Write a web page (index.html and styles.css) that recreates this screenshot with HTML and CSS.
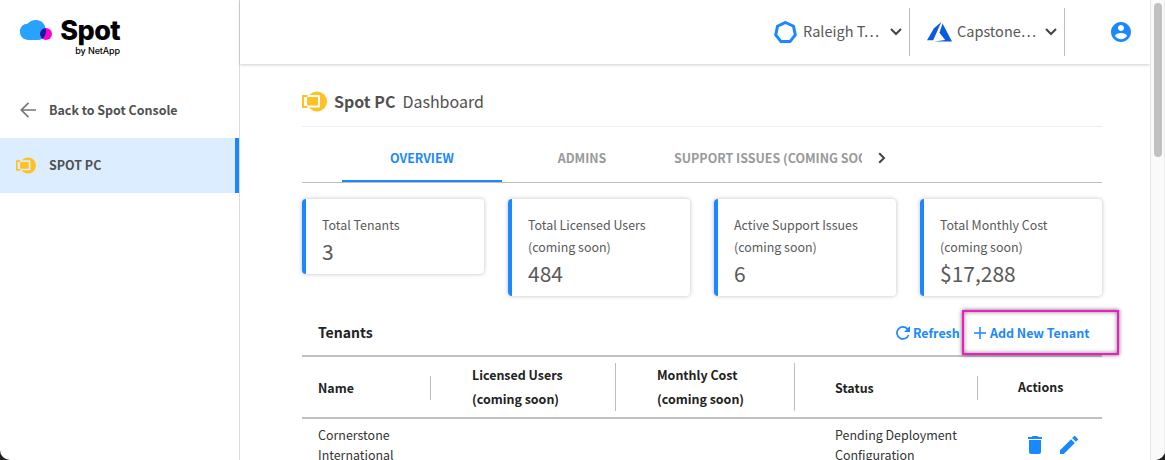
FILE: index.html
```html
<!DOCTYPE html>
<html lang="en">
<head>
<meta charset="utf-8">
<title>Spot PC Dashboard</title>
<link rel="stylesheet" href="styles.css">
</head>
<body>
<div class="app">
  <aside class="sidebar">
    <div class="logo">
      <svg class="logo-cloud" width="33" height="22" viewBox="0 0 33 22">
        <circle cx="26" cy="15" r="6" fill="#ff00d0"/>
        <path d="M8.500 21C-2.800 21-2.800 5 7.500 4.800C12-1 22.500-.5 25 7.500C28 14.500 24 21 18.500 21Z" fill="#28a2ff"/>
        <clipPath id="dot"><circle cx="26" cy="15" r="6"/></clipPath>
        <path clip-path="url(#dot)" d="M8.500 21C-2.800 21-2.800 5 7.500 4.800C12-1 22.500-.5 25 7.500C28 14.500 24 21 18.500 21Z" fill="#2114a0"/>
      </svg>
      <div class="logo-text"><span class="logo-name">Spot</span><span class="logo-by">by NetApp</span></div>
    </div>
    <a class="side-item back">
      <svg width="16" height="16" viewBox="0 0 16 16" fill="none" stroke="#777" stroke-width="1.700"><path d="M16 8H1.500M8.500 .8 1.300 8l7.200 7.200"/></svg>
      <span>Back to Spot Console</span>
    </a>
    <a class="side-item active">
      <svg class="pc" width="20" height="17" viewBox="0 0 25 21"><circle cx="15" cy="10.500" r="10" fill="#ffc225"/><rect x="3" y="4" width="15" height="12.500" rx="1" fill="#dbedff"/><path d="M5.500 5H1v11h4.500" fill="none" stroke="#ffc225" stroke-width="2"/><rect x="5" y="6" width="11" height="8.500" rx="1" fill="#ffc225"/></svg>
      <span>SPOT PC</span>
    </a>
  </aside>
  <div class="page">
    <header class="topbar">
      <div class="picker org">
        <svg width="25" height="25" viewBox="0 0 25 25" fill="none" stroke="#1a88ff" stroke-width="3"><path d="M12.500 2.500 20.500 6.200 22.300 14.800 17 21.600H8L2.700 14.800 4.500 6.200Z"/></svg>
        <span>Raleigh T…</span>
        <svg class="chev" width="12" height="8" viewBox="0 0 12 8"><path d="M1 1l5 5 5-5"/></svg>
      </div>
      <div class="picker account">
        <svg width="25" height="20" viewBox="0 0 25 20" fill="#0a5be0"><path d="M14.300 0 7 6.200 0 18.200h6.200Z"/><path d="M15.500 1.500 25 19.600H7.200L18.200 18 12.500 10.800Z"/></svg>
        <span>Capstone…</span>
        <svg class="chev" width="12" height="8" viewBox="0 0 12 8"><path d="M1 1l5 5 5-5"/></svg>
      </div>
      <svg class="user" width="20" height="20" viewBox="2 2 20 20"><path fill="#1a88ff" d="M12 2C6.480 2 2 6.480 2 12s4.480 10 10 10 10-4.480 10-10S17.520 2 12 2zm0 3c1.660 0 3 1.340 3 3s-1.340 3-3 3-3-1.340-3-3 1.340-3 3-3zm0 14.200c-2.500 0-4.710-1.280-6-3.220.03-1.990 4-3.080 6-3.080 1.990 0 5.970 1.090 6 3.080-1.290 1.940-3.500 3.220-6 3.220z"/></svg>
    </header>
    <main class="content">
      <h1 class="title">
        <svg width="25" height="21" viewBox="0 0 25 21"><circle cx="15" cy="10.500" r="10" fill="#ffc225"/><rect x="3" y="4" width="15" height="12.500" rx="1" fill="#fff"/><path d="M5.500 5H1v11h4.500" fill="none" stroke="#ffc225" stroke-width="2"/><rect x="5" y="6" width="11" height="8.500" rx="1" fill="#ffc225"/></svg>
        <b>Spot PC</b><span>Dashboard</span>
      </h1>
      <nav class="tabs">
        <a class="tab on">OVERVIEW</a>
        <a class="tab">ADMINS</a>
        <a class="tab wide">SUPPORT ISSUES (COMING SOON)</a>
        <svg class="next" width="8" height="12" viewBox="0 0 8 12"><path d="M1.200 1.200 6 6l-4.800 4.800"/></svg>
      </nav>
      <section class="cards">
        <div class="card"><p>Total Tenants</p><strong>3</strong></div>
        <div class="card"><p>Total Licensed Users<br>(coming soon)</p><strong>484</strong></div>
        <div class="card"><p>Active Support Issues<br>(coming soon)</p><strong>6</strong></div>
        <div class="card"><p>Total Monthly Cost<br>(coming soon)</p><strong>$17,288</strong></div>
      </section>
      <section class="tenants">
        <div class="tools">
          <h2>Tenants</h2>
          <a class="refresh"><svg width="14" height="14" viewBox="0 0 14 14"><path d="M12.600 9A6 6 0 1 1 11.300 2.800L12.500 4" fill="none" stroke="#1a88ff" stroke-width="1.700"/><path d="M14 0v6H8Z" fill="#1a88ff"/></svg><span>Refresh</span></a>
          <a class="add"><svg width="12" height="12" viewBox="0 0 12 12"><path d="M6 0v12M0 6h12" stroke="#1a88ff" stroke-width="1.500"/></svg><span>Add New Tenant</span></a>
        </div>
        <div class="row head">
          <div class="cell single">Name</div>
          <div class="cell two">Licensed Users<br>(coming soon)</div>
          <div class="cell two">Monthly Cost<br>(coming soon)</div>
          <div class="cell single status">Status</div>
          <div class="cell actions">Actions</div>
        </div>
        <div class="row body">
          <div class="cell">Cornerstone<br>International</div>
          <div class="cell"></div>
          <div class="cell"></div>
          <div class="cell status">Pending Deployment<br>Configuration</div>
          <div class="cell actions">
            <svg width="14" height="18" viewBox="5 3 14 18" fill="#1a88ff"><path d="M6 19c0 1.100.9 2 2 2h8c1.100 0 2-.9 2-2V7H6v12zM19 4h-3.500l-1-1h-5l-1 1H5v2h14V4z"/></svg>
            <svg width="18" height="18" viewBox="3 3 18 18" fill="#1a88ff"><path d="M3 17.250V21h3.750L17.810 9.940l-3.750-3.750L3 17.250zM20.710 7.040a1 1 0 0 0 0-1.410l-2.340-2.340a1 1 0 0 0-1.410 0l-1.830 1.830 3.750 3.750 1.830-1.830z"/></svg>
          </div>
        </div>
      </section>
    </main>
  </div>
  <div class="scrollbar"><div class="thumb"></div></div>
</div>
</body>
</html>
```

FILE: styles.css
```css
* { box-sizing: border-box; }
body { margin: 0; background: #222; font-family: "Noto Sans CJK SC", sans-serif; font-size: 12.45px; color: #505050; }
svg { display: block; flex: none; }
h1, h2, p { margin: 0; }
.app { display: flex; width: 1165px; height: 460px; overflow: hidden; background: #fff; border-radius: 0 0 10px 10px; }

.sidebar { width: 240px; flex: none; border-right: 1px solid #dcdcdc; }
.logo { display: flex; height: 83px; padding: 19px 0 0 20px; }
.logo-text { display: flex; flex-direction: column; align-items: flex-end; width: 61px; margin-left: 6px; color: #000; white-space: nowrap; }
.logo-name { padding-top: 1px; font: 800 27px/22px Inter, sans-serif; letter-spacing: -.6px; }
.logo-by { padding-top: 3px; font: 500 9px/11px Inter, sans-serif; letter-spacing: -.1px; }
.side-item { display: flex; align-items: center; height: 55px; font-weight: 700; }
.side-item span { padding-bottom: 1px; }
.back svg { margin: -2px 13px 0 20px; }
.active { background: #dbedff; border-right: 4px solid #1a88ff; }
.active svg { margin: 0 13px 0 16px; }

.page { width: 910px; flex: none; }
.topbar { display: flex; height: 64px; padding-top: 8px; box-shadow: 0 1px 3px rgba(0,0,0,.2); }
.picker { display: flex; align-items: center; height: 48px; border-right: 1px solid #bdbdbd; color: #585858; font-size: 14.5px; white-space: nowrap; }
.picker span { margin: -3px 0 0 5px; }
.org { width: 137px; margin-left: 533px; }
.org span { width: 87px; }
.account { width: 155px; padding-left: 17px; }
.account span { width: 88px; }
.chev, .next { fill: none; stroke: #444; stroke-width: 2; }
.user { margin: 14px 0 0 46px; }

.content { width: 800px; margin-left: 62px; padding-top: 14px; }
.title { display: flex; align-items: center; height: 49px; padding-bottom: 2px; border-bottom: 1px solid #eee; font-size: 16px; font-weight: 400; }
.title svg { margin-top: 1px; }
.title b { margin: 0 7px 0 7px; }
.tabs { display: flex; align-items: center; height: 56px; padding-left: 40px; border-bottom: 1px solid #bdbdbd; color: #999; font-weight: 700; }
.tab { width: 160px; height: 55px; padding-top: 5px; line-height: 52px; text-align: center; }
.on { color: #1a88ff; border-bottom: 2px solid #1a88ff; }
.wide { width: 200px; padding-left: 12px; overflow: hidden; text-align: left; white-space: nowrap; }
.next { margin: 6px 0 0 16px; }
.cards { display: flex; align-items: flex-start; gap: 24px; height: 113px; padding-top: 16px; color: #5a5a5a; }
.card { width: 182px; flex: none; padding: 15px 0 6px 16px; border-left: 4px solid #1a88ff; border-radius: 4px; box-shadow: 0 0 4px rgba(0,0,0,.25); line-height: 22px; }
.card strong { display: block; height: 32px; font-size: 21px; font-weight: 400; line-height: 30px; }

.tools { display: flex; align-items: center; height: 59px; padding: 14px 0 0 16px; color: #1a88ff; font-weight: 700; white-space: nowrap; }
.tools h2 { flex: none; width: 578px; padding-bottom: 1px; color: #222; font-size: 14px; }
.refresh { display: flex; flex: none; align-items: center; gap: 3px; width: 66px; }
.add { display: flex; flex: none; align-items: center; gap: 4px; width: 157px; height: 45px; padding-left: 10px; border: 2px solid #f418c8; box-shadow: 0 0 4px rgba(0,0,0,.6), inset 0 0 4px rgba(0,0,0,.5); z-index: 1; }
.row { display: grid; grid-template-columns: 129px 185px 179px 183px 124px; color: #222; }
.head { height: 64px; align-items: center; border-top: 2px solid #c0c0c0; border-bottom: 2px solid #c0c0c0; font-weight: 700; line-height: 24px; }
.head .cell { padding-left: 41px; border-right: 1px solid #bdbdbd; }
.head .cell.single { height: 24px; margin-top: 2px; line-height: 25px; }
.head .cell.status { padding-left: 40px; }
.row .cell:first-child { padding-left: 16px; }
.head .cell.actions { border: 0; padding: 0 0 0 40px; }
.body { padding-top: 6px; line-height: 20px; color: #333; }
.status { padding-left: 40px; }
.body .actions { display: flex; gap: 18px; padding: 11px 0 0 50px; }

.scrollbar { width: 15px; padding: 3px 0 0 3px; background: #fafafa; border-left: 1px solid #e4e4e4; border-right: 1px solid #eee; }
.thumb { width: 8px; height: 154px; border-radius: 4px; background: #c1c1c1; }
```
